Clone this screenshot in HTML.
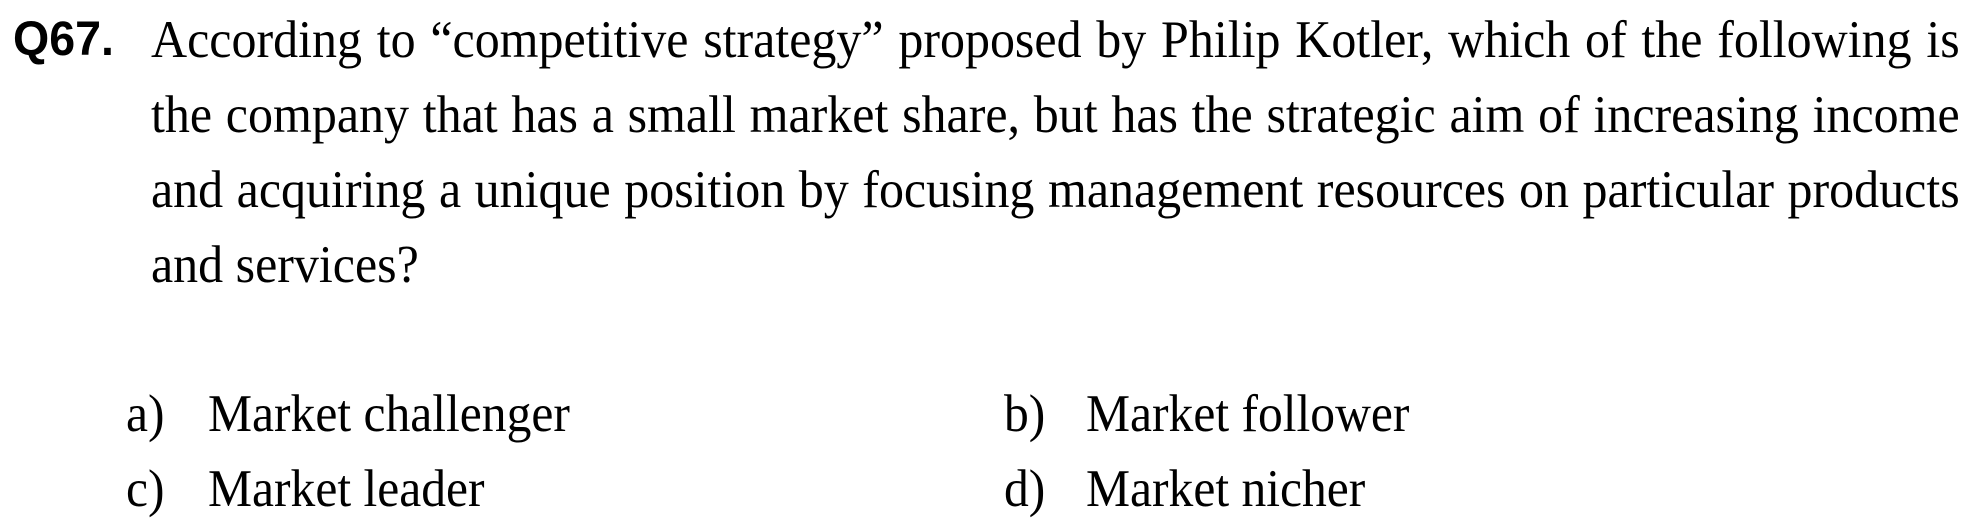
<!DOCTYPE html>
<html><head><meta charset="utf-8"><style>
html,body{margin:0;padding:0;background:#fff;}
body{width:1966px;height:526px;position:relative;overflow:hidden;color:#000;}
.q{position:absolute;left:13px;top:2px;font:bold 48px/75px "Liberation Sans",sans-serif;transform:scaleX(0.97);transform-origin:0 0;}
.l{position:absolute;left:151px;width:1918px;font:53px/75px "Liberation Serif",serif;text-align:justify;text-align-last:justify;transform:scaleX(0.943);transform-origin:0 0;white-space:nowrap;}
.l.n{text-align-last:left;}
.o{position:absolute;font:53px/75px "Liberation Serif",serif;white-space:nowrap;transform:scaleX(0.935);transform-origin:0 0;}
</style></head><body>
<div class="q">Q67.</div>
<div class="l" style="top:3px">According to “competitive strategy” proposed by Philip Kotler, which of the following is</div>
<div class="l" style="top:78px">the company that has a small market share, but has the strategic aim of increasing income</div>
<div class="l" style="top:153px">and acquiring a unique position by focusing management resources on particular products</div>
<div class="l n" style="top:228px">and services?</div>
<div class="o" style="left:126px;top:377px">a)</div><div class="o" style="left:208px;top:377px">Market challenger</div>
<div class="o" style="left:1004px;top:377px">b)</div><div class="o" style="left:1086px;top:377px">Market follower</div>
<div class="o" style="left:126px;top:452px">c)</div><div class="o" style="left:208px;top:452px">Market leader</div>
<div class="o" style="left:1004px;top:452px">d)</div><div class="o" style="left:1086px;top:452px">Market nicher</div>
</body></html>
